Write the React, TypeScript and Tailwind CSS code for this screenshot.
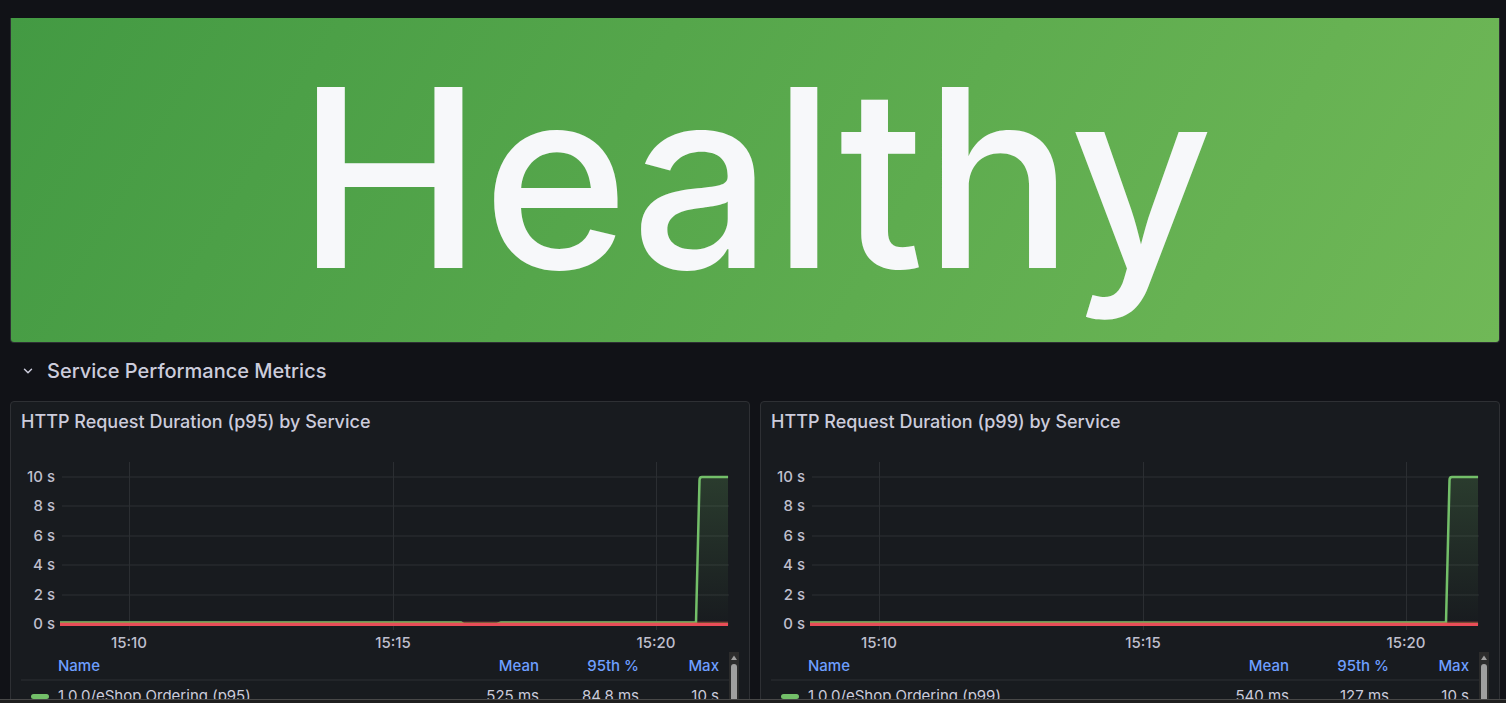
import { ChevronDown } from "lucide-react";

type Panel = {
  id: string;
  title: string;
  series: string;
  mean: string;
  p95: string;
  max: string;
  hasGap: boolean;
};

const panels: Panel[] = [
  {
    id: "p95",
    title: "HTTP Request Duration (p95) by Service",
    series: "1.0.0/eShop Ordering (p95)",
    mean: "525 ms",
    p95: "84.8 ms",
    max: "10 s",
    hasGap: true,
  },
  {
    id: "p99",
    title: "HTTP Request Duration (p99) by Service",
    series: "1.0.0/eShop Ordering (p99)",
    mean: "540 ms",
    p95: "127 ms",
    max: "10 s",
    hasGap: false,
  },
];

const yTicks = [
  { label: "10 s", y: 17 },
  { label: "8 s", y: 46 },
  { label: "6 s", y: 76 },
  { label: "4 s", y: 105 },
  { label: "2 s", y: 135 },
  { label: "0 s", y: 164 },
];

const xTicks = [
  { label: "15:10", x: 118 },
  { label: "15:15", x: 382 },
  { label: "15:20", x: 645 },
];

function DurationChart({ id, title, hasGap }: { id: string; title: string; hasGap: boolean }) {
  return (
    <svg viewBox="0 0 738 192" className="block w-full" role="img" aria-label={title}>
      <defs>
        <linearGradient id={`fill-${id}`} x1="0" y1="0" x2="0" y2="1">
          <stop offset="0" stopColor="#73bf69" stopOpacity="0.2" />
          <stop offset="1" stopColor="#73bf69" stopOpacity="0" />
        </linearGradient>
      </defs>
      {yTicks.map((t) => (
        <g key={t.label}>
          <rect x="51" y={t.y - 1} width="667" height="2" fill="#222529" />
          <text x="44" y={t.y + 5} textAnchor="end" className="fill-[#bfbfcd] text-[15px] font-medium">
            {t.label}
          </text>
        </g>
      ))}
      {xTicks.map((t) => (
        <g key={t.label}>
          <rect x={t.x} y="2" width="1" height="168" fill="#2b2e32" />
          <text x={t.x} y="188" textAnchor="middle" className="fill-[#bfbfcd] text-[15px] font-medium">
            {t.label}
          </text>
        </g>
      ))}
      <path d="M686 164 L689 20 Q689 17 691 17 H717 V164 Z" fill={`url(#fill-${id})`} />
      <rect x="49" y="161" width="668" height="1" fill="#6f2a3b" fillOpacity="0.5" />
      <path
        d={
          hasGap
            ? "M49 162.5 H450 L453 164 H486 L490 162.5 H685 L688.5 20 Q688.5 17 691 17 H717"
            : "M49 162.5 H685 L688.5 20 Q688.5 17 691 17 H717"
        }
        fill="none"
        stroke="#73bf69"
        strokeWidth="2.5"
      />
      <rect x="49" y="162" width="668" height="1" fill="#b0703f" fillOpacity="0.6" />
      <rect x="49" y="163" width="668" height="3" fill="#e84d58" />
    </svg>
  );
}

function MetricPanel({ panel }: { panel: Panel }) {
  return (
    <section className="flex min-h-80 min-w-0 flex-1 flex-col rounded-sm border border-[#2e3034] bg-[#181b1f]">
      <h2 className="px-[10px] pt-2 text-[18px] leading-6 font-medium">{panel.title}</h2>
      <div className="pt-[26px]">
        <DurationChart id={panel.id} title={panel.title} hasGap={panel.hasGap} />
      </div>
      <div className="flex min-h-0 flex-1 px-[10px]">
        <table className="w-full table-fixed self-start text-[15px] leading-6">
          <colgroup>
            <col />
            <col className="w-[100px]" />
            <col className="w-[100px]" />
            <col className="w-[80px]" />
          </colgroup>
          <thead>
            <tr className="border-b-2 border-[#222529] text-right text-[#6e9fff]">
              <th className="pt-[2px] pb-[1px] pl-[37px] text-left font-medium">Name</th>
              <th className="pt-[2px] pb-[1px] pr-[10px] font-medium">Mean</th>
              <th className="pt-[2px] pb-[1px] pr-[10px] font-medium">95th %</th>
              <th className="pt-[2px] pb-[1px] pr-[10px] font-medium">Max</th>
            </tr>
          </thead>
          <tbody>
            <tr className="text-right">
              <td className="pt-[3px] text-left">
                <span className="flex items-center gap-[9px] pl-[10px]">
                  <span className="h-[5px] w-[18px] rounded-full bg-[#73bf69]" />
                  {panel.series}
                </span>
              </td>
              <td className="pt-[3px] pr-[10px]">{panel.mean}</td>
              <td className="pt-[3px] pr-[10px]">{panel.p95}</td>
              <td className="pt-[3px] pr-[10px]">{panel.max}</td>
            </tr>
          </tbody>
        </table>
        <div className="flex w-[10px] shrink-0 flex-col items-center bg-[#2c2c2c]" aria-hidden="true">
          <svg viewBox="0 0 10 12" className="h-3 w-[10px] shrink-0">
            <path d="M5 3.5 L8 8 H2 Z" fill="#9f9f9f" />
          </svg>
          <div className="w-[6px] flex-1 rounded-t-full bg-[#9f9f9f]" />
        </div>
      </div>
    </section>
  );
}

export default function App() {
  return (
    <div className="flex h-screen flex-col overflow-hidden bg-[#111217] font-['Inter',sans-serif] text-[#ccccdc]">
      <main className="flex min-h-0 flex-1 flex-col overflow-hidden pt-[18px] pr-[6px] pl-[10px]">
        <section className="flex h-[325px] shrink-0 items-center justify-center rounded-b-sm border border-t-0 border-[#2e3034] bg-[linear-gradient(120deg,#439a43,#70b857)] pb-[6px]">
          <p className="text-[249px] leading-none font-medium text-[#f7f8fa]">Healthy</p>
        </section>
        <button
          type="button"
          className="mt-3 flex h-8 shrink-0 items-center gap-3 self-start pl-[11px] text-[20px] font-medium"
          aria-expanded="true"
        >
          <ChevronDown className="size-[14px]" strokeWidth={2.5} />
          Service Performance Metrics
        </button>
        <div className="mt-[14px] flex shrink-0 gap-[10px]">
          {panels.map((panel) => (
            <MetricPanel key={panel.id} panel={panel} />
          ))}
        </div>
      </main>
      <footer className="h-1 shrink-0 border-t border-[#484848] bg-[#1f1f1f]" />
    </div>
  );
}
